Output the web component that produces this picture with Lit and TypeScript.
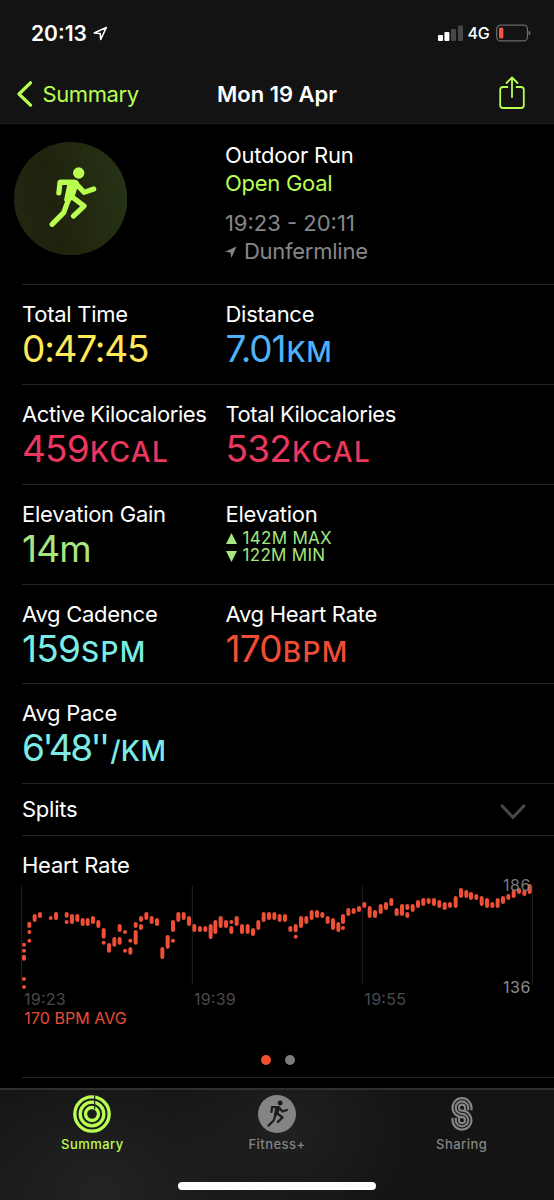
import { LitElement, html, svg, css } from "lit";
import { customElement, property } from "lit/decorators.js";

const runner = svg`
  <circle cx="235" cy="130" r="17" fill="currentColor" />
  <path d="M179 150H222Q234 151 236 160L221 206L200 222L191 212L201 163H179Z" fill="currentColor" />
  <g fill="none" stroke="currentColor" stroke-width="15.5" stroke-linecap="round" stroke-linejoin="round">
    <path d="M175.500 190L179 158H223L251 188L280 178" />
    <path d="M206 205L190 249L155 284" />
    <path d="M213 200L251 229L219 259" />
  </g>`;

// Heart-rate samples: [x, [top, bottom], ...] in thirds of a pixel.
const samples: [number, ...[number, number][]][] = [
  [72, [248, 260], [266, 278], [284, 302], [351, 363], [375, 387]],
  [88, [185, 204], [210, 222], [236, 248]], [104, [162, 186]], [120, [156, 174]],
  [152, [168, 180]], [168, [156, 180]], [200, [156, 173], [180, 192]],
  [216, [162, 192]], [232, [162, 186]], [248, [174, 198]], [263, [174, 198]],
  [279, [168, 192]], [295, [180, 204]], [311, [204, 236], [242, 254]],
  [327, [249, 278]], [343, [231, 260]], [359, [192, 216], [231, 254]],
  [375, [210, 222], [266, 278]], [391, [236, 248], [261, 284]],
  [407, [186, 204], [210, 254]], [423, [168, 186], [192, 210]], [439, [156, 180]],
  [455, [168, 192]], [471, [174, 198]], [487, [261, 297]], [503, [225, 266]],
  [519, [180, 216], [236, 248]], [535, [156, 186]], [551, [156, 180]],
  [567, [168, 198]], [583, [192, 216]], [600, [198, 216]], [616, [198, 216]],
  [632, [192, 237]], [646, [180, 222]], [662, [168, 204]], [678, [180, 204]],
  [694, [180, 192], [198, 222]], [710, [168, 198]], [726, [192, 222]],
  [743, [192, 222]], [759, [204, 228]], [775, [180, 210]], [791, [156, 186]],
  [807, [156, 180]], [823, [156, 180]], [839, [162, 186]], [855, [162, 186]],
  [871, [198, 216]], [887, [192, 217], [224, 236]], [903, [168, 204]],
  [919, [168, 192]], [935, [150, 180]], [951, [150, 174]], [967, [156, 174]],
  [983, [168, 192]], [999, [174, 210]], [1015, [186, 216]],
  [1029, [162, 192], [198, 210]], [1045, [144, 168]], [1061, [144, 162]],
  [1077, [138, 156]], [1093, [126, 144]], [1109, [138, 174]], [1125, [150, 174]],
  [1142, [132, 162]], [1158, [126, 150]], [1174, [114, 138]], [1190, [144, 168]],
  [1206, [132, 168]], [1222, [132, 150], [156, 174]], [1238, [132, 156]],
  [1254, [120, 144]], [1270, [114, 138]], [1286, [114, 132]], [1302, [114, 138]],
  [1318, [120, 144]], [1334, [126, 150]], [1350, [126, 144]], [1367, [108, 144]],
  [1383, [84, 114]], [1399, [90, 114]], [1413, [96, 120]], [1429, [102, 120]],
  [1445, [108, 138]], [1461, [114, 144]], [1477, [126, 144]], [1493, [114, 144]],
  [1509, [108, 132]], [1525, [102, 120]], [1541, [90, 114]], [1557, [84, 102]],
  [1573, [90, 108]], [1589, [72, 102]],
];

@customElement("workout-metric")
class WorkoutMetric extends LitElement {
  @property() label = "";
  @property() value = "";
  @property() unit = "";
  @property() tone = "";

  static styles = css`
    :host { display: block; white-space: nowrap; }
    .label { font-size: 22px; line-height: 28px; color: #fff; letter-spacing: var(--label-track, -0.27px); }
    .value { font-size: 37px; line-height: 42.500px; letter-spacing: var(--value-track, -0.8px); }
    .unit { font-size: 28px; font-weight: 450; letter-spacing: var(--unit-track, 1.3px); padding-left: var(--unit-gap, 1px); }
    .yellow { color: #ffe958; }
    .blue { color: #50b1fb; }
    .pink { color: #ea375f; }
    .green { color: #a5e67e; }
    .cyan { color: #7debe5; }
    .red { color: #f04d35; }
  `;

  render() {
    return html`
      <div class="label">${this.label}</div>
      <div class="value ${this.tone}">${this.value}<span class="unit">${this.unit}</span></div>
    `;
  }
}

@customElement("heart-chart")
class HeartChart extends LitElement {
  static styles = css`
    :host { display: block; }
    svg { display: block; width: 554px; height: 150px; overflow: visible; }
    .grid { stroke: #242426; stroke-width: 3; }
    .bars { stroke: #ef4f37; stroke-width: 12; stroke-linecap: round; }
    .text { font-family: Inter, sans-serif; font-size: 48px; fill: #4a4a4c; }
    .bound { fill: #8d8d92; }
    .avg { fill: #ea4d36; }
  `;

  render() {
    return html`<svg viewBox="0 60 1662 450">
      <g class="grid">
        <path d="M65 77V374M577 77V374M1087 77V374M1597 77V374" />
      </g>
      <g class="bars">
        ${samples.map(([x, ...spans]) =>
          spans.map(([a, b]) => svg`<path d="M${x} ${a + 6}V${b - 5.9}" />`))}
      </g>
      <text class="text bound" x="1509" y="94" textLength="82" opacity="0.85">186</text>
      <text class="text bound" x="1509" y="399" textLength="82">136</text>
      <text class="text" x="72" y="435" textLength="125">19:23</text>
      <text class="text" x="582" y="435" textLength="125">19:39</text>
      <text class="text" x="1093" y="435" textLength="125">19:55</text>
      <text class="text avg" x="73" y="491" textLength="307">170 BPM AVG</text>
    </svg>`;
  }
}

@customElement("app-root")
class AppRoot extends LitElement {
  static styles = css`
    :host {
      display: flex; flex-direction: column; box-sizing: border-box;
      width: 554px; height: 1200px; overflow: hidden;
      background: #000; color: #fff;
      font-family: Inter, "Liberation Sans", sans-serif; font-size: 22px;
      letter-spacing: -0.25px; white-space: nowrap;
    }
    * { box-sizing: border-box; }
    svg { display: block; flex: none; }
    .top { height: 124px; flex: none; background: #131313; border-bottom: 1px solid #1d1d1e; }
    .status { height: 66px; display: flex; align-items: center; padding: 0 23.500px 0 31px; }
    .clock { font-size: 21px; font-weight: 600; letter-spacing: 0; width: 62px; }
    .status-right { margin-left: auto; display: flex; align-items: center; }
    .network { font-size: 16px; font-weight: 500; width: 29px; padding-left: 5px; }
    .nav { height: 56px; display: grid; grid-template-columns: 1fr auto 1fr; align-items: center; padding: 0 17px; }
    .back { display: flex; align-items: center; gap: 9.500px; color: #b9ff51; letter-spacing: -0.4px; }
    .title { font-weight: 600; letter-spacing: 0; }
    .share { justify-self: end; color: #b9ff51; margin: 0 12px 3px 0; }
    .hero { height: 160px; flex: none; display: flex; padding: 18px 0 0 14px; }
    .hero-text { padding-left: 97.500px; line-height: 27.7px; }
    .goal { color: #b9ff51; }
    .when { color: #86868a; margin-top: 13px; letter-spacing: 0; }
    .where { color: #86868a; display: flex; align-items: center; gap: 7px; }
    .row {
      flex: none; height: 99.85px; margin-left: 22px; border-top: 1px solid #252527;
      display: grid; grid-template-columns: 203.500px 1fr; padding-top: 15px;
    }
    .time { --value-track: -1.2px; }
    .distance { --value-track: -1.1px; --unit-track: 0.4px; }
    .energy { --label-track: -0.41px; }
    .pace { --value-track: -2.5px; --unit-track: 0.3px; --unit-gap: 2.500px; }
    .elevation { line-height: 28px; }
    .extremes { padding-top: 2px; }
    .extreme { display: flex; align-items: center; gap: 6px; height: 17.700px; font-size: 17px; line-height: 17.700px; letter-spacing: 0.3px; color: #a5e67e; }
    .splits {
      flex: none; height: 52px; margin-left: 22px; padding: 0 28px 2px 0; border-top: 1px solid #252527;
      display: flex; align-items: center; justify-content: space-between;
    }
    .chevron { margin-top: 7px; }
    .heart { flex: none; height: 243px; margin-left: 22px; border-top: 1px solid #252527; border-bottom: 1px solid #252527; }
    .heart-title { padding-top: 15px; height: 44px; line-height: 28px; }
    .heart-plot { margin-left: -22px; letter-spacing: 0; }
    .dots { display: flex; gap: 14px; justify-content: center; padding: 24.500px 21px 0 0; }
    .dot { width: 10px; height: 10px; border-radius: 50%; background: #7b7b7f; }
    .dot-on { background: #f14f2d; }
    .tabs {
      margin-top: auto; height: 112px; flex: none; border-top: 2px solid #303031;
      background:
        radial-gradient(ellipse 190px 130px at 100px 100px, #232323, transparent),
        radial-gradient(ellipse 120px 110px at 290px 40px, #202020, transparent),
        #141414;
      display: flex; flex-direction: column; align-items: center;
    }
    .tab-list { align-self: stretch; display: grid; grid-template-columns: repeat(3, 1fr); height: 92px; }
    .tab { display: flex; flex-direction: column; align-items: center; padding-top: 5px; gap: 3px; color: #848484; font-size: 13px; font-weight: 500; line-height: 16px; letter-spacing: 0.45px; }
    .tab-on { color: #b9ff51; }
    .home { width: 198px; height: 7.500px; border-radius: 4px; background: #fff; }
  `;

  render() {
    return html`
      <header class="top">
        <div class="status">
          <span class="clock">20:13</span>
          <svg width="15" height="15" viewBox="0 0 15 15" fill="none" stroke="#fff" stroke-width="1.6" stroke-linejoin="round">
            <path d="M13.300 1.500L1.200 7L7.200 7.500L7.700 13.500Z" />
          </svg>
          <div class="status-right">
            <svg width="25" height="16" viewBox="0 0 25 16">
              <rect x="0" y="10" width="5" height="6" rx="1" fill="#fff" />
              <rect x="6.400" y="7" width="5" height="9" rx="1" fill="#fff" />
              <rect x="13" y="4" width="5" height="12" rx="1" fill="#474747" />
              <rect x="20" y="0.500" width="5" height="15.500" rx="1" fill="#474747" />
            </svg>
            <span class="network">4G</span>
            <svg width="36" height="18" viewBox="0 0 36 18">
              <rect x="4.700" y="1.100" width="30.800" height="15.800" rx="4" fill="none" stroke="#6b6b6b" stroke-width="1.200" />
              <rect x="7" y="3.400" width="4.400" height="11.200" rx="1.500" fill="#ee5545" />
            </svg>
            <svg width="3" height="6" viewBox="0 0 3 6"><path d="M0.500 0.600Q2.600 1.400 2.600 3T0.500 5.400Z" fill="#6b6b6b" /></svg>
          </div>
        </div>
        <nav class="nav">
          <div class="back">
            <svg width="16" height="26" viewBox="0 0 16 26" fill="none" stroke="currentColor" stroke-width="3.200" stroke-linecap="round" stroke-linejoin="round">
              <path d="M13.500 1.800L2 13L13.500 24.200" />
            </svg>
            <span>Summary</span>
          </div>
          <div class="title">Mon 19 Apr</div>
          <svg class="share" width="26" height="34" viewBox="0 0 26 34" fill="none" stroke="currentColor" stroke-width="1.800" stroke-linecap="round" stroke-linejoin="round">
            <path d="M8.500 11H4Q1.200 11 1.200 13.800V29.200Q1.200 32 4 32H22Q24.800 32 24.800 29.200V13.800Q24.800 11 22 11H17.500" />
            <path d="M13 21V2M7.500 7L13 1.500L18.500 7" />
          </svg>
        </nav>
      </header>

      <section class="hero">
        <svg width="113.400" height="113.400" viewBox="41 37 340 340" color="#b9ff51">
          <defs>
            <linearGradient id="disc" x1="0" y1="0.600" x2="1" y2="0.400">
              <stop offset="0" stop-color="#202710" /><stop offset="0.350" stop-color="#20220d" /><stop offset="1" stop-color="#263315" />
            </linearGradient>
          </defs>
          <circle cx="211" cy="207" r="170" fill="url(#disc)" />
          ${runner}
        </svg>
        <div class="hero-text">
          <div>Outdoor Run</div>
          <div class="goal">Open Goal</div>
          <div class="when">19:23 - 20:11</div>
          <div class="where">
            <svg width="12" height="12" viewBox="0 0 12 12"><path d="M11.500 0.500L0 5.800L5.500 6.500L6.300 12Z" fill="currentColor" /></svg>
            <span>Dunfermline</span>
          </div>
        </div>
      </section>

      <section class="row">
        <workout-metric class="time" label="Total Time" value="0:47:45" tone="yellow"></workout-metric>
        <workout-metric class="distance" label="Distance" value="7.01" unit="KM" tone="blue"></workout-metric>
      </section>
      <section class="row energy">
        <workout-metric label="Active Kilocalories" value="459" unit="KCAL" tone="pink"></workout-metric>
        <workout-metric label="Total Kilocalories" value="532" unit="KCAL" tone="pink"></workout-metric>
      </section>
      <section class="row">
        <workout-metric label="Elevation Gain" value="14m" tone="green"></workout-metric>
        <div class="elevation">
          <div>Elevation</div>
          <div class="extremes">
            <div class="extreme">
              <svg width="11" height="11" viewBox="0 0 11 11"><path d="M5.500 0L11 11H0Z" fill="currentColor" /></svg>
              <span>142M MAX</span>
            </div>
            <div class="extreme">
              <svg width="11" height="11" viewBox="0 0 11 11"><path d="M0 0H11L5.500 11Z" fill="currentColor" /></svg>
              <span>122M MIN</span>
            </div>
          </div>
        </div>
      </section>
      <section class="row">
        <workout-metric label="Avg Cadence" value="159" unit="SPM" tone="cyan"></workout-metric>
        <workout-metric label="Avg Heart Rate" value="170" unit="BPM" tone="red"></workout-metric>
      </section>
      <section class="row">
        <workout-metric class="pace" label="Avg Pace" value="6'48''" unit="/KM" tone="cyan"></workout-metric>
      </section>

      <section class="splits">
        <span>Splits</span>
        <svg class="chevron" width="26" height="16" viewBox="0 0 26 16" fill="none" stroke="#48484a" stroke-width="3" stroke-linecap="round" stroke-linejoin="round">
          <path d="M2 1.800L13 13.500L24 1.800" />
        </svg>
      </section>

      <section class="heart">
        <div class="heart-title">Heart Rate</div>
        <div class="heart-plot"><heart-chart></heart-chart></div>
        <div class="dots"><span class="dot dot-on"></span><span class="dot"></span></div>
      </section>

      <footer class="tabs">
        <div class="tab-list">
          <div class="tab tab-on">
            <svg width="38" height="38" viewBox="-57 -57 114 114" fill="none" stroke="currentColor" stroke-width="10">
              <circle r="51.500" /><circle r="35.500" /><circle r="19.500" />
              <path d="M8 -57V-14" stroke="#1c1c1c" stroke-width="3.500" />
            </svg>
            <span>Summary</span>
          </div>
          <div class="tab">
            <svg width="38" height="38" viewBox="-57 -57 114 114">
              <circle r="57" fill="currentColor" />
              <g color="#1d1d1d" transform="scale(0.44) translate(-213 -205)">${runner}</g>
            </svg>
            <span>Fitness+</span>
          </div>
          <div class="tab">
            <svg width="38" height="38" viewBox="506 165 114 114" fill="none" stroke="currentColor" stroke-width="6.600">
              <path d="M591.500 211V203A28.500 28.500 0 0 0 534.500 203A28.500 28.500 0 0 0 563 231.500A9 9 0 0 1 572 240.500A9 9 0 0 1 554 240.500V233" />
              <path d="M581.750 211V203A18.750 18.750 0 0 0 544.250 203A18.750 18.750 0 0 0 563 221.750A18.750 18.750 0 0 1 581.750 240.500A18.750 18.750 0 0 1 544.250 240.500V233" />
              <path d="M572 211V203A9 9 0 0 0 554 203A9 9 0 0 0 563 212A28.500 28.500 0 0 1 591.500 240.500A28.500 28.500 0 0 1 534.500 240.500V233" />
            </svg>
            <span>Sharing</span>
          </div>
        </div>
        <div class="home"></div>
      </footer>
    `;
  }
}
